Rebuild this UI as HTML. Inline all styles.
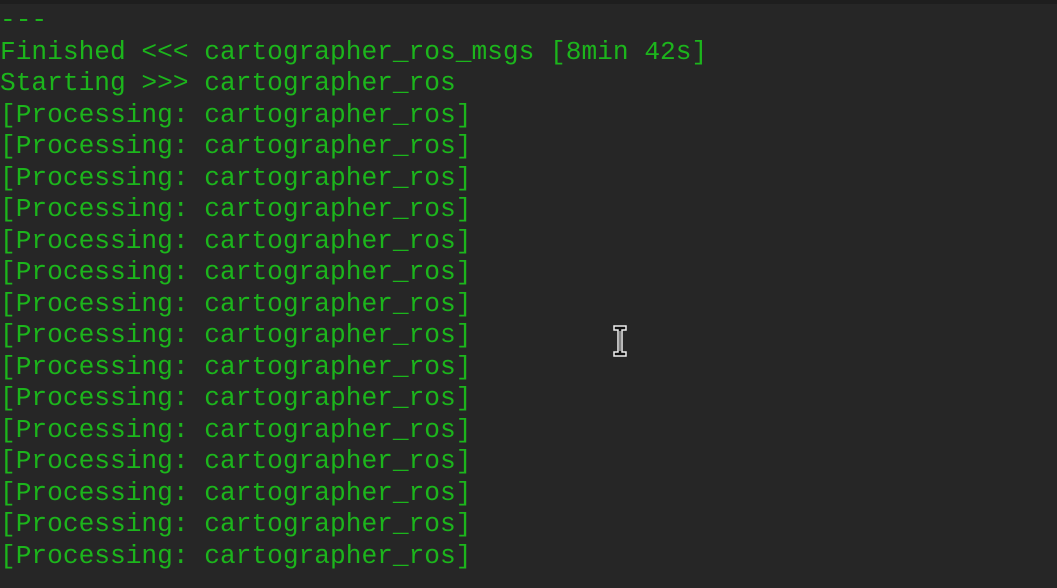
<!DOCTYPE html>
<html><head><meta charset="utf-8"><style>
html,body{margin:0;padding:0;width:1057px;height:588px;overflow:hidden;background:#262626;}
.bar{position:absolute;left:0;top:0;width:1057px;height:4px;background:#1e1e1e;}
pre{position:absolute;left:0;top:5px;margin:0;font-family:"Liberation Mono",monospace;font-size:26.2px;line-height:31.5px;color:#1cb51c;}
.cur{position:absolute;left:612px;top:324px;}
</style></head><body>
<div class="bar"></div>
<pre>---
Finished &lt;&lt;&lt; cartographer_ros_msgs [8min 42s]
Starting &gt;&gt;&gt; cartographer_ros
[Processing: cartographer_ros]
[Processing: cartographer_ros]
[Processing: cartographer_ros]
[Processing: cartographer_ros]
[Processing: cartographer_ros]
[Processing: cartographer_ros]
[Processing: cartographer_ros]
[Processing: cartographer_ros]
[Processing: cartographer_ros]
[Processing: cartographer_ros]
[Processing: cartographer_ros]
[Processing: cartographer_ros]
[Processing: cartographer_ros]
[Processing: cartographer_ros]
[Processing: cartographer_ros]</pre>
<svg class="cur" width="16" height="36" viewBox="0 0 16 36">
<path d="M2 2H14V6H10V28H14V32H2V28H6V6H2Z" fill="#111" stroke="#eee" stroke-width="1.5"/>
<path d="M8 7V27" stroke="#eee" stroke-width="1"/>
</svg>
</body></html>
